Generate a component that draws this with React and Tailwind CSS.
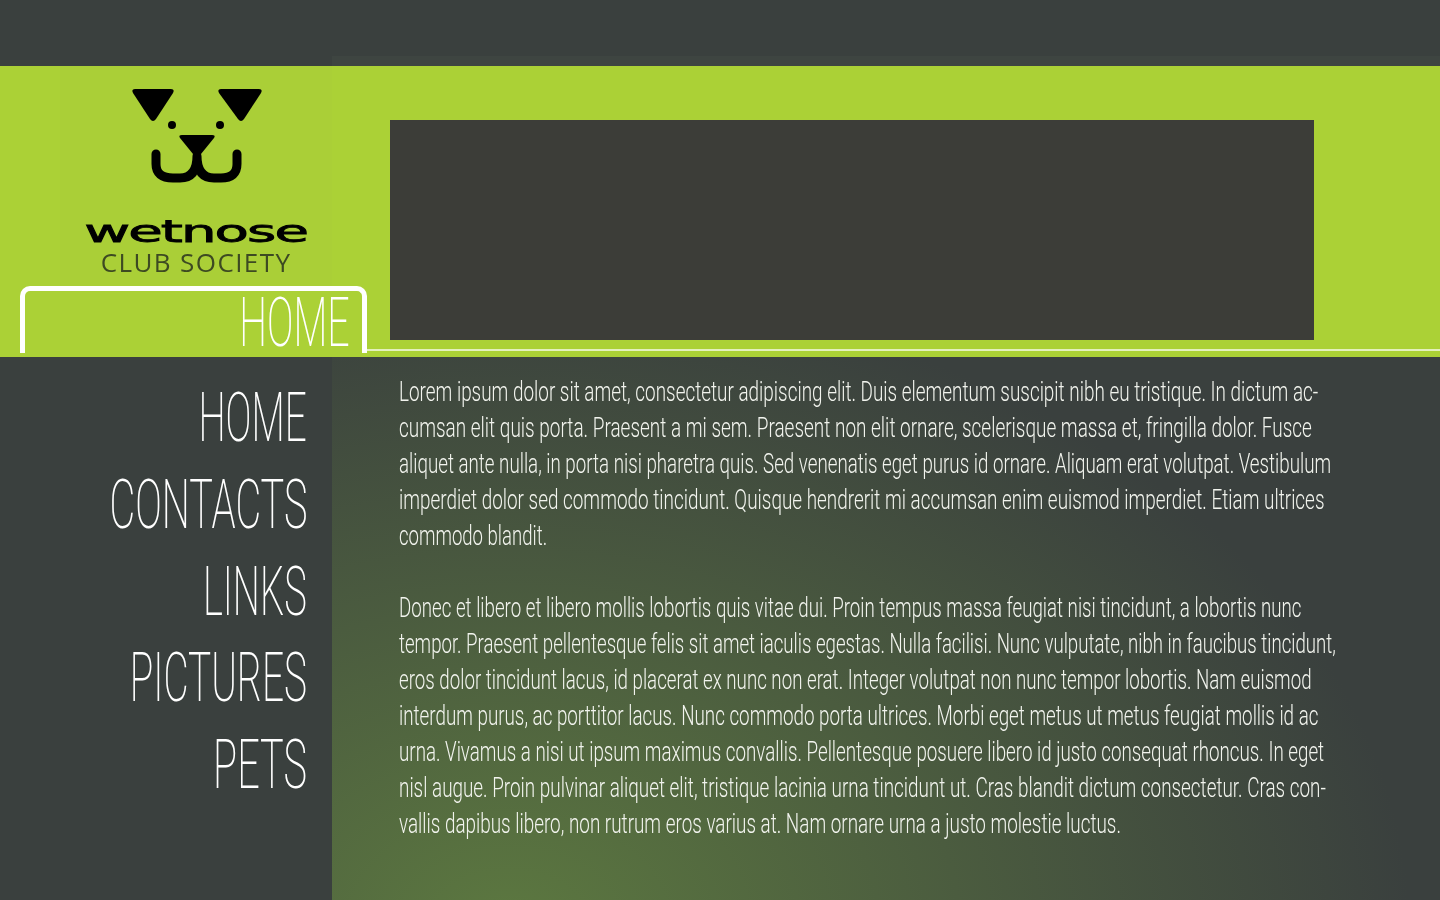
const navItems = [
  { label: "HOME", sx: 0.568 },
  { label: "CONTACTS", sx: 0.583 },
  { label: "LINKS", sx: 0.562 },
  { label: "PICTURES", sx: 0.57 },
  { label: "PETS", sx: 0.583 },
];

const para1 = [
  ["Lorem ipsum dolor sit amet, consectetur adipiscing elit. Duis elementum suscipit nibh eu tristique. In dictum ac-", 0.675],
  ["cumsan elit quis porta. Praesent a mi sem. Praesent non elit ornare, scelerisque massa et, fringilla dolor. Fusce", 0.677],
  ["aliquet ante nulla, in porta nisi pharetra quis. Sed venenatis eget purus id ornare. Aliquam erat volutpat. Vestibulum", 0.669],
  ["imperdiet dolor sed commodo tincidunt. Quisque hendrerit mi accumsan enim euismod imperdiet. Etiam ultrices", 0.675],
  ["commodo blandit.", 0.663],
];

const para2 = [
  ["Donec et libero et libero mollis lobortis quis vitae dui. Proin tempus massa feugiat nisi tincidunt, a lobortis nunc", 0.668],
  ["tempor. Praesent pellentesque felis sit amet iaculis egestas. Nulla facilisi. Nunc vulputate, nibh in faucibus tincidunt,", 0.665],
  ["eros dolor tincidunt lacus, id placerat ex nunc non erat. Integer volutpat non nunc tempor lobortis. Nam euismod", 0.668],
  ["interdum purus, ac porttitor lacus. Nunc commodo porta ultrices. Morbi eget metus ut metus feugiat mollis id ac", 0.671],
  ["urna. Vivamus a nisi ut ipsum maximus convallis. Pellentesque posuere libero id justo consequat rhoncus. In eget", 0.67],
  ["nisl augue. Proin pulvinar aliquet elit, tristique lacinia urna tincidunt ut. Cras blandit dictum consectetur. Cras con-", 0.674],
  ["vallis dapibus libero, non rutrum eros varius at. Nam ornare urna a justo molestie luctus.", 0.674],
];

function Logo() {
  return (
    <div className="w-[272px] h-[242px] bg-[#aacf37] flex flex-col items-center">
      <svg width="272" height="132" viewBox="0 0 272 132" className="blur-[0.6px]">
        <path d="M75 23 H111 Q115 23 113 27 L96 53 Q93 57 90 53 L73 27 Q71 23 75 23 Z" fill="#000" />
        <path d="M161 23 H199 Q203 23 201 27 L184 53 Q181 57 178 53 L159 27 Q157 23 161 23 Z" fill="#000" />
        <circle cx="112" cy="59" r="4" fill="#000" />
        <circle cx="160" cy="59" r="4" fill="#000" />
        <path d="M122 69 H152 Q156 69 154 72 L141 88 Q137 92 133 88 L120 72 Q118 69 122 69 Z" fill="#000" />
        <path d="M96 88 V98 Q96 112 113 112 H120 Q137 112 137 90 Q137 112 154 112 H161 Q177 112 177 98 V88" fill="none" stroke="#000" strokeWidth="9" strokeLinecap="round" strokeLinejoin="round" />
      </svg>
      <div className="mt-[21px] h-[26px] w-full flex justify-center blur-[0.6px]">
        <div className="font-['DejaVu_Sans'] text-[30px] leading-[26px] text-black tracking-[-1px] [-webkit-text-stroke:0.8px_#000] origin-center scale-x-[1.87]">wetnose</div>
      </div>
      <div className="mt-[2px] font-['Open_Sans'] text-[26px] leading-[30px] text-[#3d4a22] tracking-[1.4px] blur-[0.6px]">CLUB SOCIETY</div>
    </div>
  );
}

function TextLine({ sx, children }) {
  return (
    <div className="h-[36px] whitespace-nowrap origin-left" style={{ transform: `scaleX(${sx})` }}>
      {children}
    </div>
  );
}

export default function App() {
  return (
    <div className="h-[900px] overflow-hidden bg-[#3a403e] font-['Roboto',sans-serif] text-white">
      <div className="h-[66px] flex items-end pl-[332px]">
        <div className="h-[10px] flex-1 bg-[#3e4541]" />
      </div>
      <header className="relative h-[291px] bg-[#abd136] flex">
        <div className="w-[332px] pl-[60px] shrink-0">
          <Logo />
        </div>
        <div className="ml-[58px] mt-[54px] w-[924px] h-[220px] bg-[#3c3d38]" />
        <div className="absolute left-[367px] right-0 top-[283px] h-[2px] bg-[#e4f0bd]" />
        <div className="absolute left-[20px] top-[220px] w-[347px] h-[67px] border-[5px] border-b-0 border-white rounded-t-[10px] bg-[#abd136] pr-[12px] text-right font-extralight text-[68px] leading-[64px]">
          <span className="inline-block origin-right scale-x-[0.579]">HOME</span>
        </div>
      </header>
      <div className="flex h-[543px]">
        <nav className="w-[332px] shrink-0 pr-[25px] pt-[18px] flex flex-col items-end">
          {navItems.map((item) => (
            <a
              key={item.label}
              className="h-[86.75px] text-[68px] leading-[87px] font-extralight origin-right"
              style={{ transform: `scaleX(${item.sx})` }}
            >
              {item.label}
            </a>
          ))}
        </nav>
        <main className="flex-1 pl-[67px] pt-[17px] text-[28px] leading-[36px] font-[350] text-[#f2f4ee] bg-[radial-gradient(ellipse_900px_640px_at_12%_105%,#5c7840,#3a403e)]">
          {para1.map(([l, sx]) => <TextLine key={l} sx={sx}>{l}</TextLine>)}
          <div className="h-[36px]" />
          {para2.map(([l, sx]) => <TextLine key={l} sx={sx}>{l}</TextLine>)}
        </main>
      </div>
    </div>
  );
}
